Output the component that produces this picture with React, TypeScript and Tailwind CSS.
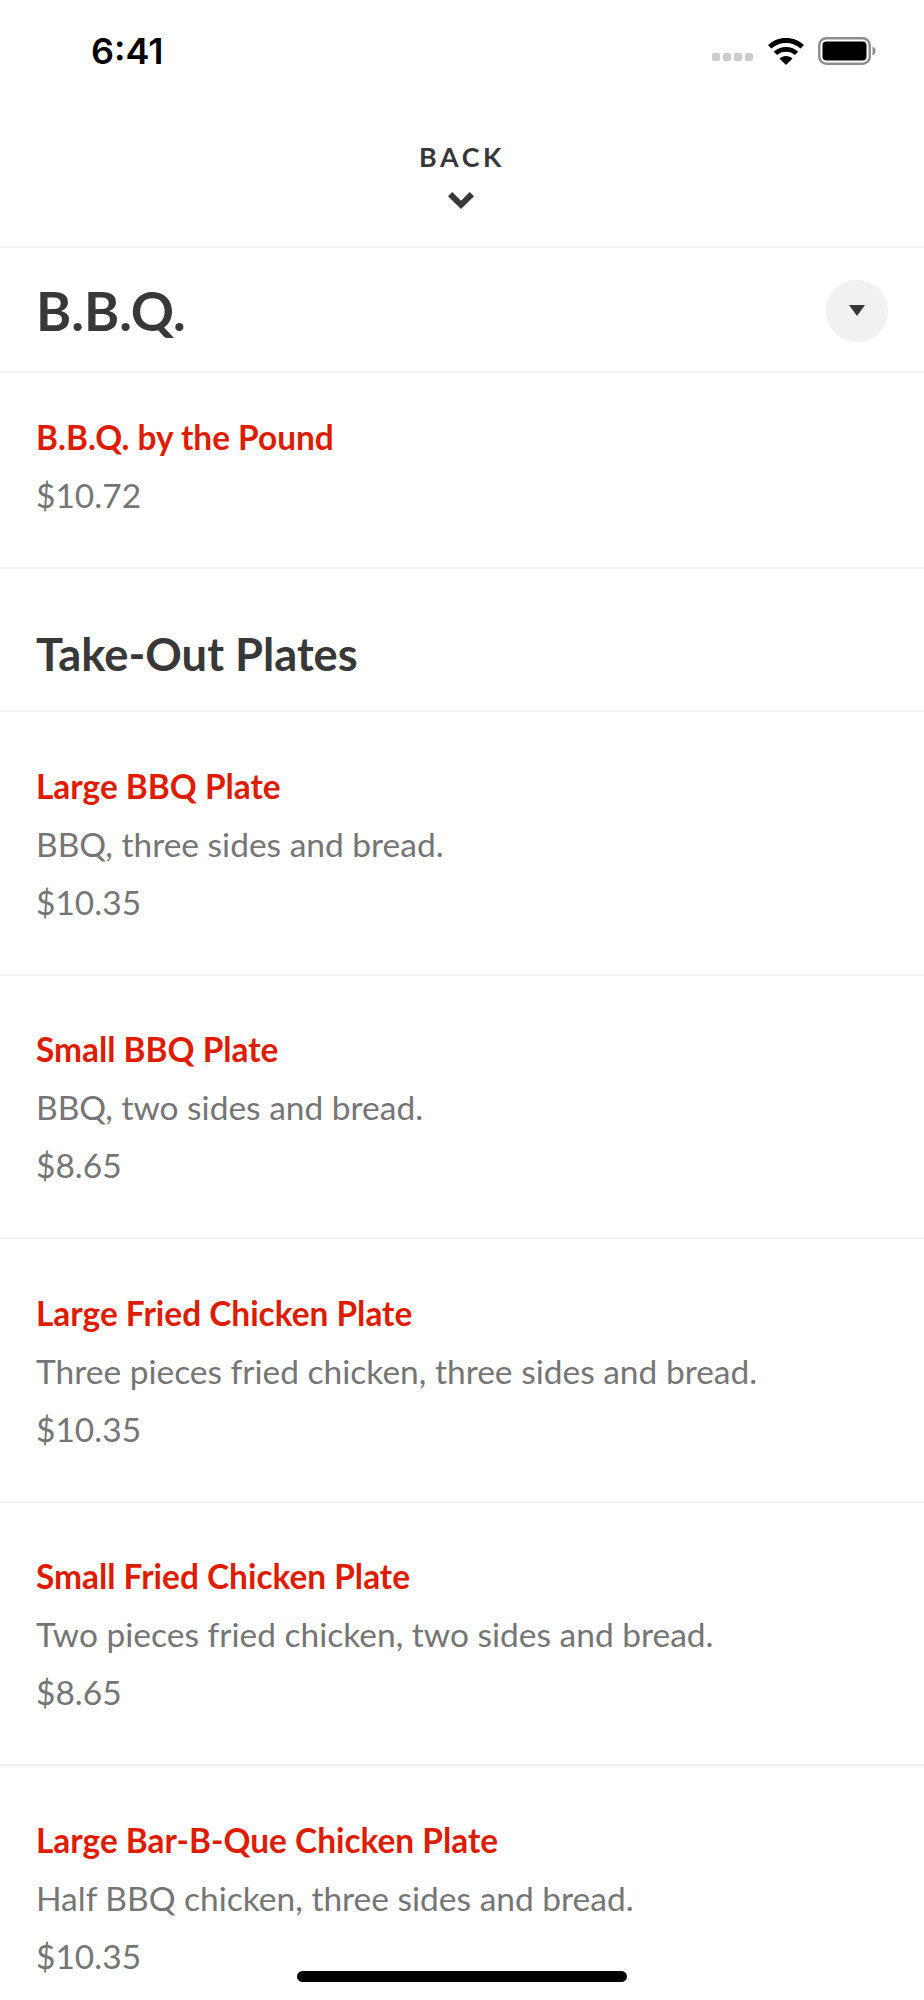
const items = [
  { name: "Large BBQ Plate", desc: "BBQ, three sides and bread.", price: "$10.35" },
  { name: "Small BBQ Plate", desc: "BBQ, two sides and bread.", price: "$8.65" },
  { name: "Large Fried Chicken Plate", desc: "Three pieces fried chicken, three sides and bread.", price: "$10.35" },
  { name: "Small Fried Chicken Plate", desc: "Two pieces fried chicken, two sides and bread.", price: "$8.65" },
  { name: "Large Bar-B-Que Chicken Plate", desc: "Half BBQ chicken, three sides and bread.", price: "$10.35" },
];

function Item({ name, desc, price, first }: { name: string; desc?: string; price: string; first?: boolean }) {
  return (
    <div className={first ? "h-[196px] border-b-2 border-[#f1f1f1] px-9 pt-[44px]" : "h-[263.5px] border-b-2 border-[#f1f1f1] px-9 pt-[53.5px]"}>
      <div className="text-[33.4px] leading-[40px] font-bold text-[#dd1c00]">{name}</div>
      {desc && <div className="mt-[18px] text-[33.5px] leading-[40px] text-[#757575]">{desc}</div>}
      <div className="mt-[18px] text-[33.5px] leading-[40px] text-[#757575]">{price}</div>
    </div>
  );
}

export default function App() {
  return (
    <div className="relative h-[2000px] w-[924px] overflow-hidden bg-white font-['Lato','Open_Sans',sans-serif] text-[#383838]">
      <div className="flex h-[100px] items-start justify-between pl-[91px] pr-[48px] pt-[30px]">
        <span className="font-['Inter',sans-serif] text-[36px] leading-[42px] font-semibold text-black">6:41</span>
        <div className="mt-[7px] flex items-center">
          <div className="mt-[12px] mr-[15px] flex gap-[3px]">
            <span className="h-[7.5px] w-[8px] rounded-[2px] bg-[#cccccc]" />
            <span className="h-[7.5px] w-[8px] rounded-[2px] bg-[#cccccc]" />
            <span className="h-[7.5px] w-[8px] rounded-[2px] bg-[#cccccc]" />
            <span className="h-[7.5px] w-[8px] rounded-[2px] bg-[#cccccc]" />
          </div>
          <svg width="36" height="27" viewBox="0 0 36 27" className="mr-[14px]">
            <path d="M18 0C11 0 5 2.6 0 7l3.4 3.6C7.4 7 12.4 5 18 5s10.6 2 14.6 5.6L36 7C31 2.6 25 0 18 0z" fill="#000" />
            <path d="M18 9c-4.8 0-9 1.8-12.2 4.7l3.3 3.4C11.4 15 14.5 13.8 18 13.8s6.6 1.2 8.9 3.3l3.3-3.4C27 10.8 22.8 9 18 9z" fill="#000" />
            <path d="M18 18c-2.6 0-4.8 1-6.5 2.5L18 27l6.5-6.5C22.8 19 20.6 18 18 18z" fill="#000" />
          </svg>
          <svg width="58" height="28" viewBox="0 0 58 28">
            <rect x="1.25" y="1.25" width="50.5" height="25.5" rx="7" fill="none" stroke="#8e8e8e" strokeWidth="2.5" />
            <rect x="4.5" y="4.5" width="44" height="19" rx="4" fill="#000" />
            <path d="M54.5 9.5c2 .6 3 2.4 3 4.5s-1 3.9-3 4.5z" fill="#8e8e8e" />
          </svg>
        </div>
      </div>

      <div className="flex h-[148px] flex-col items-center border-b-2 border-[#f1f1f1] pt-[42px]">
        <span className="text-[26.8px] leading-[30px] font-bold tracking-[3.6px] text-[#383838]">BACK</span>
        <svg width="26" height="17" viewBox="0 0 26 17" className="mt-[20px] mr-[3px]">
          <path d="M0 4.2 4.2 0 13 8.8 21.8 0 26 4.2 13 17z" fill="#383838" />
        </svg>
      </div>

      <div className="flex h-[125px] items-center justify-between border-b-2 border-[#f1f1f1] pl-9 pr-9">
        <h1 className="mt-[1px] text-[53.5px] leading-[64px] font-bold text-[#383838]">B.B.Q.</h1>
        <button className="mt-[2px] flex h-[62px] w-[62px] items-center justify-center rounded-full bg-[#f1f1f1]">
          <svg width="16" height="11" viewBox="0 0 16 11">
            <path d="M0 0h16L8 11z" fill="#383838" />
          </svg>
        </button>
      </div>

      <Item first name="B.B.Q. by the Pound" price="$10.72" />

      <div className="flex h-[143px] items-end border-b-2 border-[#f1f1f1] px-9 pb-[30px]">
        <h2 className="text-[45.3px] leading-[52px] font-bold text-[#383838]">Take-Out Plates</h2>
      </div>

      {items.map((it) => (
        <Item key={it.name} {...it} />
      ))}

      <div className="absolute bottom-[18px] left-[297px] h-[11px] w-[330px] rounded-full bg-black" />
    </div>
  );
}
